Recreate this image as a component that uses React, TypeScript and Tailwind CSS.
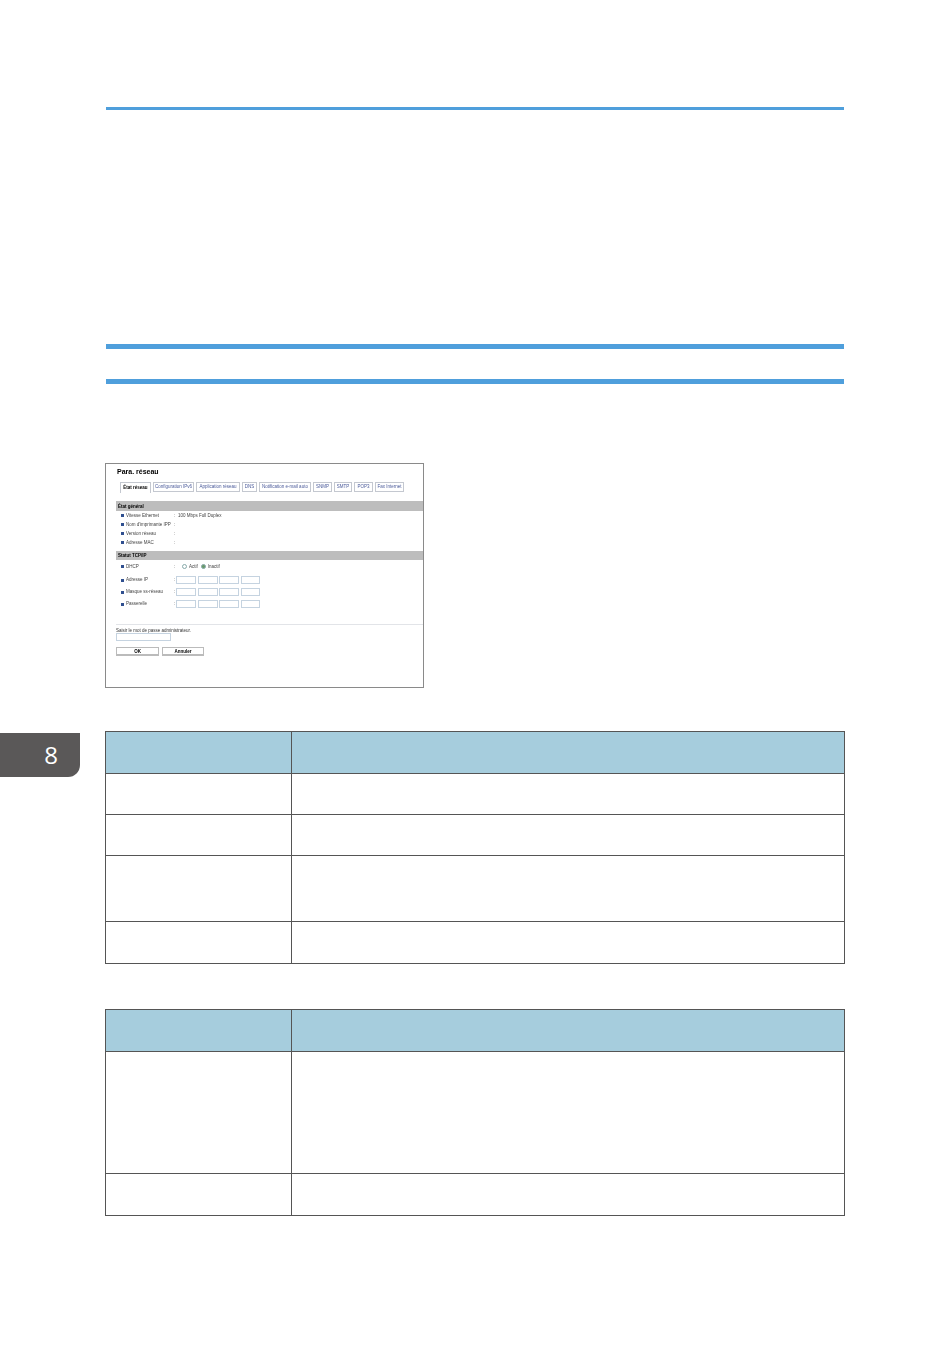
import React from "react";

const tabs = [
    { label: "État réseau", w: "w-[31px]", active: true },
    { label: "Configuration IPv6", w: "w-[41px]" },
    { label: "Application réseau", w: "w-[44px]" },
    { label: "DNS", w: "w-[15px]" },
    { label: "Notification e-mail auto", w: "w-[52px]" },
    { label: "SNMP", w: "w-[19px]" },
    { label: "SMTP", w: "w-[18px]" },
    { label: "POP3", w: "w-[19px]" },
    { label: "Fax Internet", w: "w-[29px]" },
];

function Bullet() {
    return <span className="w-[3px] h-[3px] bg-[#2f4f8f] mr-[2px] shrink-0" />;
}

function InfoRow({ label, value }: { label: string; value?: string }) {
    return (
        <div className="flex items-center h-[9px] pl-[5px]">
            <Bullet />
            <span className="w-[48px] whitespace-nowrap">{label}</span>
            <span className="w-[4px]">:</span>
            <span className="whitespace-nowrap">{value}</span>
        </div>
    );
}

function IpRow({ label }: { label: string }) {
    return (
        <div className="flex items-center h-[12px] pl-[5px]">
            <Bullet />
            <span className="w-[48px] whitespace-nowrap">{label}</span>
            <span className="w-[2px]">:</span>
            <div className="flex gap-[2px]">
                <span className="w-[20px] h-[8px] border border-[#c5d3e0] bg-white" />
                <span className="w-[20px] h-[8px] border border-[#c5d3e0] bg-white" />
                <span className="w-[20px] h-[8px] border border-[#c5d3e0] bg-white -ml-[1px]" />
                <span className="w-[19px] h-[8px] border border-[#c5d3e0] bg-white" />
            </div>
        </div>
    );
}

function NetworkShot() {
    return (
        <div className="w-[319px] h-[225px] border border-[#8a8a8a] bg-white overflow-hidden text-[4.5px] leading-[6px] text-[#444] blur-[0.3px]">
            <div className="pl-[10px] pt-[3px]">
                <div className="ml-[1px] text-[7px] leading-[9px] font-bold text-black">Para. réseau</div>
                <div className="flex gap-[2px] mt-[6px] pl-[4px] h-[11px]">
                    {tabs.map((t) => (
                        <div
                            key={t.label}
                            className={`${t.w} h-[10px] border border-[#c4c8d0] flex items-center justify-center whitespace-nowrap ${
                                t.active ? "text-black font-bold border-[#999] border-b-0 h-[11px]" : "text-[#4a5a9a]"
                            }`}
                        >
                            {t.label}
                        </div>
                    ))}
                </div>

                <div className="h-[10px] mt-[8px] pt-[1px] bg-[#bdbdbd] flex items-center pl-[2px] font-bold text-black">État général</div>
                <div>
                    <InfoRow label="Vitesse Ethernet" value="100 Mbps Full Duplex" />
                    <InfoRow label="Nom d'imprimante IPP" />
                    <InfoRow label="Version réseau" />
                    <InfoRow label="Adresse MAC" />
                </div>
                <div className="h-[9px] mt-[4px] pt-[1px] bg-[#bdbdbd] flex items-center pl-[2px] font-bold text-black">Statut TCP/IP</div>
                <div className="flex items-center h-[9px] mt-[2px] pl-[5px]">
                    <Bullet />
                    <span className="w-[48px]">DHCP</span>
                    <span className="w-[8px]">:</span>
                    <span className="w-[5px] h-[5px] rounded-full border border-[#8aa] mr-[2px]" />
                    <span className="mr-[3px]">Actif</span>
                    <span className="w-[5px] h-[5px] rounded-full border border-[#8aa] bg-[#6a9a6a] mr-[2px]" />
                    <span>Inactif</span>
                </div>
                <div className="mt-[3px]">
                    <IpRow label="Adresse IP" />
                    <IpRow label="Masque ss-réseau" />
                    <IpRow label="Passerelle" />
                </div>
            </div>
            <div className="ml-[10px] mt-[14px] border-t border-[#e2e4e8] pt-[3px]">
                <div className="whitespace-nowrap leading-[5px] text-[#333]">Saisir le mot de passe administrateur.</div>
                <div className="w-[55px] h-[8px] border border-[#c5d3e0]" />
                <div className="flex gap-[3px] mt-[6px]">
                    <div className="w-[43px] h-[9px] pt-[1px] bg-white border border-[#bbb] border-b-2 flex items-center justify-center font-bold text-black">OK</div>
                    <div className="w-[42px] h-[9px] pt-[1px] bg-white border border-[#bbb] border-b-2 flex items-center justify-center font-bold text-black">Annuler</div>
                </div>
            </div>
        </div>
    );
}

function SpecTable({ rows }: { rows: string[] }) {
    return (
        <table className="w-[740px] border-collapse table-fixed">
            <colgroup>
                <col className="w-[186px]" />
                <col />
            </colgroup>
            <tbody>
                <tr className="h-[42px] bg-[#a6cddd]">
                    <td className="border border-[#555]" />
                    <td className="border border-[#555]" />
                </tr>
                {rows.map((h, i) => (
                    <tr key={i} className={h}>
                        <td className="border border-[#555]" />
                        <td className="border border-[#555]" />
                    </tr>
                ))}
            </tbody>
        </table>
    );
}

export default function App() {
    return (
        <div className="relative w-[950px] h-[1348px] bg-white overflow-hidden font-['Liberation_Sans',sans-serif]">
            {/* chapter thumb */}
            <div className="absolute left-0 top-[733px] w-[80px] h-[44px] bg-[#5a5858] rounded-br-[12px] flex items-center justify-end pr-[22px] text-[24px] leading-none text-white font-['Open_Sans',sans-serif]">
                8
            </div>

            <div className="pt-[107px] pl-[105px]">
                <div className="ml-[1px] w-[738px] h-[3px] bg-[#4f9fdc]" />
                <div className="ml-[1px] mt-[234px] w-[738px] h-[5px] bg-[#4f9fdc]" />
                <div className="ml-[1px] mt-[30px] w-[738px] h-[5px] bg-[#4f9fdc]" />
                <div className="mt-[79px]">
                    <NetworkShot />
                </div>
                <div className="mt-[43px]">
                    <SpecTable rows={["h-[41px]", "h-[41px]", "h-[66px]", "h-[42px]"]} />
                </div>
                <div className="mt-[45px]">
                    <SpecTable rows={["h-[122px]", "h-[42px]"]} />
                </div>
            </div>
        </div>
    );
}
